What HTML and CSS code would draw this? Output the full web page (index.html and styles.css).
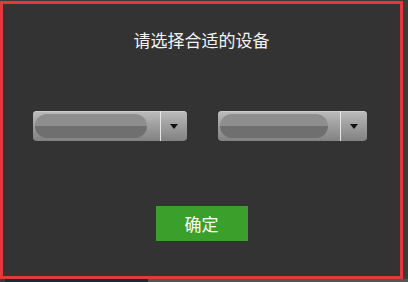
FILE: index.html
```html
<!DOCTYPE html>
<html>
<head>
<meta charset="utf-8">
<link rel="stylesheet" href="styles.css">
</head>
<body>
<div class="page">
  <div class="row">
    <div class="dialog">
      <div class="title">请选择合适的设备</div>
      <div class="selects">
        <div class="select s1">
          <div class="value"><span class="blob"></span></div>
          <div class="arrow"><span class="tri"></span></div>
        </div>
        <div class="select s2">
          <div class="value"><span class="blob"></span></div>
          <div class="arrow"><span class="tri"></span></div>
        </div>
      </div>
      <div class="actions"><button class="ok">确定</button></div>
    </div>
    <div class="side"></div>
  </div>
  <div class="bottom"><span class="navy"></span><span class="grey"></span></div>
</div>
</body>
</html>
```
FILE: styles.css
```css
html, body { margin: 0; padding: 0; }
body {
  width: 408px; height: 282px; overflow: hidden;
  background: #3a3a3a;
  font-family: "Noto Sans CJK SC", "Noto Sans", sans-serif;
}
.page { display: flex; flex-direction: column; width: 408px; height: 282px; }
.row { display: flex; padding-top: 1px; }
.dialog {
  width: 397px; height: 272px;
  border: 3px solid #e1393d;
  background: #333333;
  display: flex; flex-direction: column; align-items: center;
}
.side { flex: 1; background: #3c3c3c; }
.title {
  margin-top: 25px;
  color: #f2f2f2; font-size: 17px; line-height: 22px;
}
.selects {
  margin-top: 60px;
  display: flex; gap: 31px; padding-right: 4px;
}
.select {
  height: 30px;
  border-radius: 4px;
  background: linear-gradient(#bdbdbd, #a0a0a0 45%, #828282);
  display: flex;
  box-shadow: inset 0 1px 0 #cacaca;
}
.s1 { width: 154px; }
.s2 { width: 149px; }
.value { flex: 1; display: flex; align-items: center; padding-left: 2px; }
.blob {
  display: block; height: 24px;
  border-radius: 12px;
  background: linear-gradient(#8e8e8e 0, #8e8e8e 48%, #6f6f6f 52%, #6f6f6f);
}
.s1 .blob { width: 112px; }
.s2 .blob { width: 108px; }
.arrow {
  width: 26px; border-left: 1px solid #e6e6e6;
  display: flex; align-items: center; justify-content: center;
}
.tri {
  width: 0; height: 0;
  border-left: 4px solid transparent; border-right: 4px solid transparent;
  border-top: 5px solid #111;
}
.actions { margin-top: 65px; }
.ok {
  width: 92px; height: 35px;
  border: none; border-radius: 0;
  background: #3b9f2c;
  color: #ffffff; font-size: 17px;
  font-family: "Noto Sans CJK SC", sans-serif;
  padding: 0; line-height: 35px;
}
.bottom { display: flex; flex: 1; }
.navy { width: 143px; margin-left: 5px; background: #1b2a38; }
.grey { flex: 1; background: #555; }
```
